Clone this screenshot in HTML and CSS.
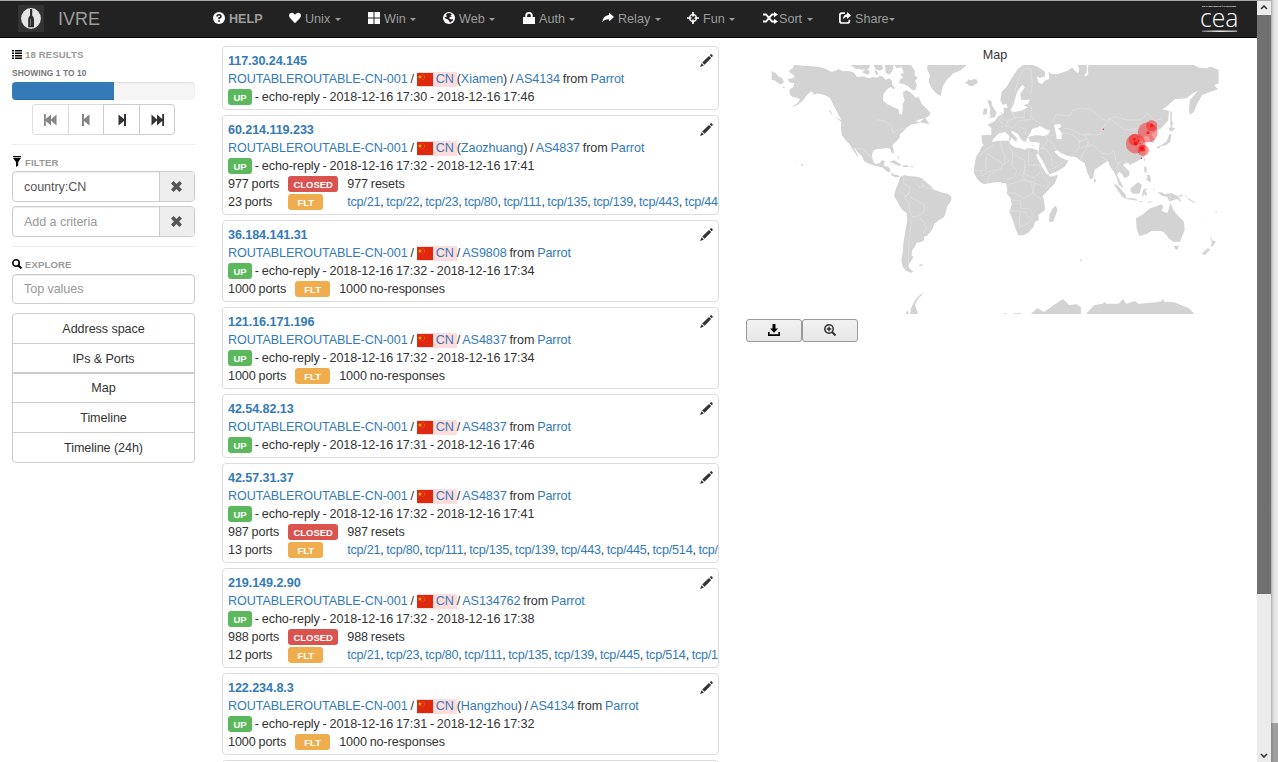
FILE: index.html
```html
<!DOCTYPE html>
<html lang="en">
<head>
<meta charset="utf-8">
<title>IVRE</title>
<link rel="stylesheet" href="styles.css">
</head>
<body>
<svg class="defs" aria-hidden="true">
  <symbol id="flag" viewBox="0 0 16 13"><path fill="#de2910" d="M0 0h16v13H0z"/><path fill="#ffb400" d="M3 2l.6 1.3 1.4.1-1 .9.3 1.500L3 5.100l-1.300.7.3-1.500-1-.9 1.400-.1z"/><path fill="#ee6a10" d="M5.500 1.200h1v1h-1zM7 2.700h1v1H7zM7 4.500h1v1H7zM5.500 6h1v1h-1z"/></symbol>
  <symbol id="pencil" viewBox="0 0 13 13"><path d="M9.700 1.300 10.800.3q.5-.4 1 .1l.8.8q.4.500 0 1L11.600 3.300zM9 1.900l2.200 2.200L4.600 10.700 2.200 8.500zM1.600 9.200l2.300 2.200L0 13z"/></symbol>
  <symbol id="times" viewBox="0 0 11 11"><path d="M2.600 0 5.500 2.900 8.400 0 11 2.600 8.100 5.500 11 8.400 8.400 11 5.500 8.100 2.600 11 0 8.400 2.900 5.500 0 2.600z"/></symbol>
</svg>
<div class="window">
<div class="page">
  <nav class="navbar">
    <a class="brand"><svg class="logo" viewBox="0 0 26 27"><rect width="26" height="27" rx="1" fill="#333"/><ellipse cx="13" cy="13.500" rx="9.900" ry="10.400" fill="#e4e4e4"/><path fill="#2c2c2c" d="M12 4h2.200v6.500q1.800 1.500 1.800 4v7.800h-5.800v-7.800q0-2.500 1.800-4z"/><path fill="#777" d="M12 14h1v7h-1z"/></svg><span>IVRE</span></a>
    <div class="menu">
      <a class="help"><svg viewBox="0 0 12 12"><circle cx="6" cy="6" r="6"/><path d="M4 4.600Q4 2.700 6 2.700T8 4.400Q8 5.400 6.100 6.100V7.300" fill="none" stroke="#222" stroke-width="1.600"/><path fill="#222" d="M5.200 8.300h1.700v1.500H5.200z"/></svg><b>HELP</b></a>
      <a class="unix"><svg viewBox="0 0 12 12"><path d="M6 11.200 1 6Q-.8 3.500.8 1.600 3.500-.5 6 2.700 8.500-.5 11.200 1.600 12.800 3.500 11 6z"/></svg>Unix <i class="caret"></i></a>
      <a><svg viewBox="0 0 12 12"><path d="M0 0h5.500v5.500H0zM6.500 0H12v5.500H6.500zM0 6.500h5.500V12H0zM6.500 6.500H12V12H6.500z"/></svg>Win <i class="caret"></i></a>
      <a><svg viewBox="0 0 12 12"><circle cx="6" cy="6" r="6"/><path fill="#222" d="M4 1.500 7 1l2 1.500-1.500.8L9 5 7.300 4.800 6 6l2 1.500 1.500-.5.800 1L7 10.800 6 9 5 7.500 2 6.300 1.500 4.500l1.300.8L4 4.300 3 3z"/></svg>Web <i class="caret"></i></a>
      <a><svg viewBox="0 0 12 12"><path d="M0 5h2.300V3Q2.500 0 6 0T9.700 3V5H12v7H0zM4.200 5h3.600V3.500Q7.800 1.800 6 1.800T4.200 3.500z"/></svg>Auth <i class="caret"></i></a>
      <a><svg viewBox="0 0 12 12"><path d="M7 .5l5 4.500L7 9.600V7.200Q2.500 7 0 10.500 1 3.500 7 3z"/></svg>Relay <i class="caret"></i></a>
      <a><svg viewBox="0 0 12 12"><g fill="none" stroke="#fff"><circle cx="6" cy="6" r="3.300" stroke-width="1.300"/><path stroke-width="1.700" d="M6 0v4.500M6 7.500V12M0 6h4.500M7.500 6H12"/></g></svg>Fun <i class="caret"></i></a>
      <a class="sort"><svg viewBox="0 0 15 12"><path fill="none" stroke="#fff" stroke-width="1.900" d="M0 2.500h3L9 9.500h3M0 9.500h3L9 2.500h3"/><path d="M11 0l4 2.600L11 5.300zM11 6.700l4 2.700-4 2.600z"/></svg>Sort <i class="caret"></i></a>
      <a><svg viewBox="0 0 12 12"><path fill="none" stroke="#fff" stroke-width="1.700" d="M6 1.200H3Q.9 1.200.9 3v6q0 2 2 2h5.500q2 0 2-2V7.800"/><path d="M8 0l4 3.500L8 7V4.700Q5.500 4.700 4 7.500 4 2.500 8 2.200z"/></svg>Share<i class="caret"></i></a>
    </div>
    <svg class="cea" viewBox="0 0 40 30"><text x="2" y="3" font-size="2.600" font-weight="bold" textLength="34" lengthAdjust="spacingAndGlyphs">DE LA RECHERCHE À L'INDUSTRIE</text><text class="word" x="0" y="22.500" font-size="25" textLength="38.500" lengthAdjust="spacingAndGlyphs">cea</text><defs><linearGradient id="bar"><stop stop-color="#777"/><stop offset=".5" stop-color="#fff"/><stop offset="1" stop-color="#aaa"/></linearGradient></defs><rect x="2" y="26.500" width="35" height="1.400" fill="url(#bar)"/></svg>
  </nav>
  <div class="content">
    <aside>
      <h6 class="first"><svg viewBox="0 0 10 9"><path d="M0 0h2v1.500H0zM3 0h7v1.500H3zM0 2.500h2V4H0zM3 2.500h7V4H3zM0 5h2v1.500H0zM3 5h7v1.500H3zM0 7.500h2V9H0zM3 7.500h7V9H3z"/></svg>18 RESULTS</h6>
      <div class="showing">SHOWING 1 TO 10</div>
      <div class="progress"><div class="done"></div></div>
      <div class="pager">
        <button class="off"><svg viewBox="0 0 13 12"><path d="M0 0h1.800v5L7 0.500v5L12.500.5v11L7 6.500v5L1.800 7v5H0z"/></svg></button>
        <button class="off"><svg class="one" viewBox="0 0 8 12"><path d="M0 0h2v5L7.500.5v11L2 7v5H0z"/></svg></button>
        <button><svg class="one" viewBox="0 0 8 12"><path d="M8 0H6v5L.5.5v11L6 7v5h2z"/></svg></button>
        <button><svg viewBox="0 0 13 12"><path d="M13 0h-1.800v5L6 .5v5L.5.500v11L6 6.500v5L11.200 7v5H13z"/></svg></button>
      </div>
      <hr>
      <h6><svg class="funnel" viewBox="0 0 10 11"><path d="M1 0h8v1.200H1zM1 2h8L6.200 6v3.500L4 11V6z"/></svg>FILTER</h6>
      <div class="field"><span class="value">country:CN</span><span class="addon"><svg><use href="#times"/></svg></span></div>
      <div class="field"><span class="hint">Add a criteria</span><span class="addon"><svg><use href="#times"/></svg></span></div>
      <hr class="second">
      <h6><svg class="search" viewBox="0 0 10 10"><circle cx="4" cy="4" r="3.200" fill="none" stroke="#000" stroke-width="1.600"/><path stroke="#000" stroke-width="2" d="M6.200 6.200l3.200 3.200"/></svg>EXPLORE</h6>
      <div class="field top"><span class="hint">Top values</span></div>
      <div class="choices"><a>Address space</a><a>IPs &amp; Ports</a><a class="mid">Map</a><a>Timeline</a><a>Timeline (24h)</a></div>
    </aside>
    <main>
      <section class="host"><svg class="edit"><use href="#pencil"/></svg>
        <p><a class="ip">117.30.24.145</a></p>
        <p><a>ROUTABLEROUTABLE-CN-001</a> / <a class="cn"><svg><use href="#flag"/></svg>CN</a>(<a>Xiamen</a>) / <a>AS4134</a> from <a>Parrot</a></p>
        <p><span class="tag up">UP</span> - echo-reply - 2018-12-16 17:30 - 2018-12-16 17:46</p>
      </section>
      <section class="host"><svg class="edit"><use href="#pencil"/></svg>
        <p><a class="ip">60.214.119.233</a></p>
        <p><a>ROUTABLEROUTABLE-CN-001</a> / <a class="cn"><svg><use href="#flag"/></svg>CN</a>(<a>Zaozhuang</a>) / <a>AS4837</a> from <a>Parrot</a></p>
        <p><span class="tag up">UP</span> - echo-reply - 2018-12-16 17:32 - 2018-12-16 17:41</p>
        <div class="ports"><span>977 ports</span><span class="tag closed">CLOSED</span><span>977 resets</span><span>23 ports</span><span class="tag flt">FLT</span><span class="list"><a>tcp/21</a>, <a>tcp/22</a>, <a>tcp/23</a>, <a>tcp/80</a>, <a>tcp/111</a>, <a>tcp/135</a>, <a>tcp/139</a>, <a>tcp/443</a>, <a>tcp/445</a></span></div>
      </section>
      <section class="host"><svg class="edit"><use href="#pencil"/></svg>
        <p><a class="ip">36.184.141.31</a></p>
        <p><a>ROUTABLEROUTABLE-CN-001</a> / <a class="cn"><svg><use href="#flag"/></svg>CN</a>/ <a>AS9808</a> from <a>Parrot</a></p>
        <p><span class="tag up">UP</span> - echo-reply - 2018-12-16 17:32 - 2018-12-16 17:34</p>
        <div class="ports"><span>1000 ports</span><span class="tag flt">FLT</span><span>1000 no-responses</span></div>
      </section>
      <section class="host"><svg class="edit"><use href="#pencil"/></svg>
        <p><a class="ip">121.16.171.196</a></p>
        <p><a>ROUTABLEROUTABLE-CN-001</a> / <a class="cn"><svg><use href="#flag"/></svg>CN</a>/ <a>AS4837</a> from <a>Parrot</a></p>
        <p><span class="tag up">UP</span> - echo-reply - 2018-12-16 17:32 - 2018-12-16 17:34</p>
        <div class="ports"><span>1000 ports</span><span class="tag flt">FLT</span><span>1000 no-responses</span></div>
      </section>
      <section class="host"><svg class="edit"><use href="#pencil"/></svg>
        <p><a class="ip">42.54.82.13</a></p>
        <p><a>ROUTABLEROUTABLE-CN-001</a> / <a class="cn"><svg><use href="#flag"/></svg>CN</a>/ <a>AS4837</a> from <a>Parrot</a></p>
        <p><span class="tag up">UP</span> - echo-reply - 2018-12-16 17:31 - 2018-12-16 17:46</p>
      </section>
      <section class="host"><svg class="edit"><use href="#pencil"/></svg>
        <p><a class="ip">42.57.31.37</a></p>
        <p><a>ROUTABLEROUTABLE-CN-001</a> / <a class="cn"><svg><use href="#flag"/></svg>CN</a>/ <a>AS4837</a> from <a>Parrot</a></p>
        <p><span class="tag up">UP</span> - echo-reply - 2018-12-16 17:32 - 2018-12-16 17:41</p>
        <div class="ports"><span>987 ports</span><span class="tag closed">CLOSED</span><span>987 resets</span><span>13 ports</span><span class="tag flt">FLT</span><span class="list"><a>tcp/21</a>, <a>tcp/80</a>, <a>tcp/111</a>, <a>tcp/135</a>, <a>tcp/139</a>, <a>tcp/443</a>, <a>tcp/445</a>, <a>tcp/514</a>, <a>tcp/1025</a></span></div>
      </section>
      <section class="host"><svg class="edit"><use href="#pencil"/></svg>
        <p><a class="ip">219.149.2.90</a></p>
        <p><a>ROUTABLEROUTABLE-CN-001</a> / <a class="cn"><svg><use href="#flag"/></svg>CN</a>/ <a>AS134762</a> from <a>Parrot</a></p>
        <p><span class="tag up">UP</span> - echo-reply - 2018-12-16 17:32 - 2018-12-16 17:38</p>
        <div class="ports"><span>988 ports</span><span class="tag closed">CLOSED</span><span>988 resets</span><span>12 ports</span><span class="tag flt">FLT</span><span class="list"><a>tcp/21</a>, <a>tcp/23</a>, <a>tcp/80</a>, <a>tcp/111</a>, <a>tcp/135</a>, <a>tcp/139</a>, <a>tcp/445</a>, <a>tcp/514</a>, <a>tcp/1025</a></span></div>
      </section>
      <section class="host"><svg class="edit"><use href="#pencil"/></svg>
        <p><a class="ip">122.234.8.3</a></p>
        <p><a>ROUTABLEROUTABLE-CN-001</a> / <a class="cn"><svg><use href="#flag"/></svg>CN</a>(<a>Hangzhou</a>) / <a>AS4134</a> from <a>Parrot</a></p>
        <p><span class="tag up">UP</span> - echo-reply - 2018-12-16 17:31 - 2018-12-16 17:32</p>
        <div class="ports"><span>1000 ports</span><span class="tag flt">FLT</span><span>1000 no-responses</span></div>
      </section>
      <section class="host"></section>
    </main>
    <div class="mapcol">
      <div class="title">Map</div>
      <svg class="map" viewBox="18 75 1494 747">
        <g fill="#d3d3d3">
          <path d="M95 93l12 6 8 10 10 4 7 12-8 9-10-5-10-8-9-1zM126 138l10 4-6 3z"/>
          <path d="M163 75l-5 10-12 7 6 8 12 7-4 7-18 4 8 10 13 1-3 12-12 8 2 15 8 7 14 3 8 3-6 11-22 14 20-7 16-12 16-22 11-7 7 10 10-4 18 4 18 8 7 12 7 15 8 13 6 14 8 13-1 25 2 20 10 15 13 13 7 12 10 15 10 15-3-12-12-20 6 5 10 13 12 12 4 12 13 6 15 6 18 4 12 4 10 10 12 4 4 9 12 5 12-2-6-4-9-2-14-6-1-11-5-7-10-1-4-8 5-8-11-2-6 9-14 1-7-10-2-15 3-13 11-6 15-1 15-3 10 3 7 15 5-5-5-20 13-13 10-12-1-8 11-9 10-11 15-10 15-2 10-5-14-3 20-7 18-6 8-10-12-14-14-13-6-12-5-12-6 6-8-9-10-9-12-6-10 4 1 14 4 12-6 12v15l-3 17-8-5-1-12-15-6-20-10-12-11 1-18 11-15 15-10 0-14-7-9-13 4-7-9-10-3-6 6-14-2-13 4-16-6-18 2-12-14-14-4-16 1-14-6-20 8-25-12-18-4z"/>
          <path d="M330 75h60l-2 10-12 5-28-4zM365 96l16-8 10 8-8 8zM400 75h26l3 12-9 5-14-6zM435 75h26l-2 13-10 16-12-6zM407 88l9 14-6 3-6-10zM463 75h50l12 18-2 12 10 9-8 8 5 13-3 14-9 2-14-12-13-7-14-3 4-12 8-4-8-10 10-5-6-16-16 2zM445 128l10 5 10 10-4 5-9-8-11 5zM540 246l15-14 13 20-20-3zM268 209l5 4 3 12-4-4zM288 230l18 12 2 8-14-12z"/>
          <path d="M562 75h118l-20 17-20 8-20 20-12 20-6 28-14-8-13-15-9-20 4-20-8-15zM675 125l5 2 5-9 8 3 10-4 8 2 2 10-16 10-12-3-2-5-8-2z"/>
          <path d="M448 365l14-4 25 15-12 1zM487 377l12-2 9 5-18 2zM512 379h8v3h-8zM472 350l5-1-1 10zM170 365h4v2h-4zM183 373l5-1v6h-4z"/>
          <path d="M480 412l12-7 13 3 25 2 15 5 15 13 15 12 4 8 21 8 25 6 10 10-3 13-10 13-4 17-6 17-17 10-13 10-2 10-10 16-10 10-8 2 1 10-8 5-15 3-5 12-8 10-2 15 5 7-8 13-7 10 3 10 12 10-8 3-14-6-10-12-4-20 4-20 2-30 7-40 5-30-2-20-15-12-10-18-13-22 6-23 7-15zM537 674l12-2-4 6-7-1zM510 822l3-17 7-15 12-18 18-15-4 7-12 13-9 17 9 28zM498 822l3-13 6 13z"/>
          <g transform="translate(720)">
            <path d="M65 155l15-15 15-25 20-30 15-10h28l15 5 22 15 1 14-14 4-12-3 6 18 10 4 8-10 14-6-2-20 10 6 18 0 28-10 14-9 8 8 9 9 5-8-4-17h26l0 22-7 10 4 2 8-6-2-18 3-10 315 0 17 8 20 2 15-5 23 10v40l-13 6 11 12-22 7-25 10-15 25-10 25-12 10-3-15 3-30 24-28-15 8-20 15-35 3-25 22-12 8 20 4-2 28-21 25-20 10-10 7 10 18-3 10-10-5-4-15-10-2-8 7-12-5 4 10 13 2-7 13 12 20-10 20-20 10-15 7-15-4-10 7 20 20-2 13-13 7-10-15-7-5-6 10 13 25 7 15-14-10-8-25-8-15-12-17-5-16-15 10-25 18-5 25-8 3-10-23-7-25-15-10-10-8-25-4-20-8-13-10-7 5 15 17 26 10-11 18-25 15-20 8-5-8-15-30-15-25 3-15 2-17-28-3-6-13 23-10 16 3 22-5 5-8-15-5-17-10-12 10 2 8-20 7-5 8-8 17-12-8-10-17-18-10-3 4 18 18-2 12-10-8-24-22-20 5-17 18-2 13-22 7-8-10-2-23 30-2v-20l-12-10 22-10 10-15 18-10-2-15 12-1 17 14 25-5 20-10-14-6 14-5 6-12-26 1-3-18 13-20-7-8-16 22-10 36-10 20h-7l-4-20-12 2-7-12z"/>
            <path d="M20 308l-15 12-7 15-10 15-3 20-3 15v15l10 18 13 12 10 2 20-4 25-3 5 5h13l4 20-2 10 12 15 3 20-7 20 10 25 10 30 7 16 15 0 15-8 15-16 5-17 11-5-1-15 20-15-3-30-4-12 17-18 20-20 9-25-24 5-10-15-12-20-13-30-3-15-17-5-15 0-5 5-15-5-15-3-15-10-2-10h-33l-17 4z"/>
            <path d="M22 180l13 2 0 12 15 24-5 14-20 3 8-8-4-6 2-14zM12 205l10 2-2 16-12 2zM228 497l4 13-12 35-12 1v-21l10-20zM342 415l6 5-2 7h-4zM88 288l4 2v12l-5-1zM152 317l14-2-6 4zM78 185l6-2 2 14-5 1z"/>
            <path d="M468 535l22-13 20-17 15-5 20-7 5 7-5 12 17 8 10-32 8 22 12 15 20 20 2 25-14 35-20 0-15-10-6-12-4 2-2-8-13-4-25 0-15 9-22 6-8-22zM582 617l14 0-3 12-8-2zM689 587l10 15 9 2-12 18-3-5 3-10zM665 641l18-16 8 3-16 17z"/>
            <path d="M400 430l12 6 25 28 2 12-12-5-14-20zM438 473l30 3 5 6-30-4zM452 445l22-18 12 8-8 26-18 0-8-6zM490 448l14-3-8 8 6 10-6 5-4-9-2 13-4-6zM477 483l20 2-18 1zM500 487l18-5-9 6zM520 443l4 8-4-2zM532 457l14 0 8 6 20-4 20 10 12 18-16-10-22 8-6-14-16-4zM594 468l15-6-5 8zM610 462l14 10-3 1zM625 475l20 12-2 2-20-11zM655 526l10 8-2-1zM704 517l8-3-3 5z"/>
            <path d="M492 382l6-3 3 14-7 7zM498 404l12 2 4 18-6 2-10-8 5-6zM494 354l3 2-4 9-2-5zM446 370l8-1-3 8zM528 322l18-8 14-10 8-22 6 2-3 22-12 9-18 4-4 8zM566 268l4-8 15 5-10 10zM571 212l5 4-1 25 4 8-4 15-4-10z"/>
            <path d="M152 822l20-18 20 12 25-18 32-21 18 18 24-2 12 9 0 20zM318 822l25-27 25-4 5-6 5 6 38 0 13-14 10 14 26-8 10 8 54-4 16-4 3-8 4 10 30 2 45 18 16 17zM72 820h8v2h-8zM102 820l20-1v3h-20zM300 658l6 1-1 5-4-1z"/>
            <path fill="#fff" d="M148 284l8-16 12-6 8 8 10-5 12 12 10 6-18 5-22-3-14 4zM222 255l18-4 4 10-10 4 12 15-2 18-14-2-2-15zM168 345l6-4 20 35 12 24-5 4-16-25z"/>
          </g>
        </g>
        <g fill="none" stroke="#e8e8e8" stroke-width="1.500">
          <path d="M411 239l22 4 22 15 3 20 15-7 27-8M335 325l35 2 18 20 18 12M425 388l8-16M492 408l-2 22 18 10 0 15-10 15-20-20M515 415l15 15 10 14 12-10 10 12 17 0M545 420l5 24M508 460l-15 12 14 20 4 25 8 15 16-5 18-12 0-22-28-14-15-10M535 530l18 16 4 20-8 14M515 540l-8 60-2 70"/>
          <g transform="translate(720)">
            <path d="M-12 355l30-26 22-14M18 350v42h-34M20 340l50 32 20-12M2 392l5 18 15-15 38-6 14-20M20 430l8-25 20-10M60 302l5 24 10 25-2 25M90 320l8 20 36 22 2 20-8 25 12 16 25 3M98 340l-2 38 14 12-8 22-24 8M145 325v50l35 0M134 375v28l30 10 18-18M82 435l28-8 20-9 25 12 4 30-28 16-28-18-20 2M180 380l10 28 18 18-8 20-10-8-26-8-5 30 20 15 14 3M95 480l25 2 4 25 22-2 15 18-10 12-20-20M92 512l50 5M120 517l-2 45 20-8 20-18M148 566l5-5 3 5-5 4z"/>
            <path d="M52 232l15 18-2 14M65 215l-3 20 22 10 20-12-10-22M84 245l-8 14 24 3 18-20 34-4M104 233l28 0 5-33M115 262l20 4 2 18M140 190l15 14-3 28 30 20M105 155l10-35 15-32 22-2 5 45-5 30M195 282l8 20-20 25M210 300l20 32M200 280l15 8 12-5M242 278l35 5 20 20 0 20-25 28M242 262l-22-20 8-18 40 4 10-18 28-6 30 5 30 28 20 6-20 20-4 20-26 2-30 0-40-20-16 0M295 305l28-8-10-14 20-4M302 325l22-10 0-15M300 358l22-38 15-6M338 315l28 25 25 3 8-12M388 235l45 35 40-4 35-22M383 240l20-10 40 10 40 0 20-20 20 22 20-5M365 350l12 8 10 10M402 330l5 32 8 10 12-12 14 5M407 385l15-20M420 375l18 20M515 275l10-10M175 325l20 0 18 22 5 34M205 390l18-6 30-20M570 458v25"/>
          </g>
        </g>
        <g transform="translate(720)" fill="#f00" fill-opacity=".4">
          <circle cx="467" cy="311" r="29.500"/><circle cx="503" cy="277" r="30"/><circle cx="515" cy="257" r="17"/><circle cx="490" cy="331" r="17"/><circle cx="463" cy="299" r="17"/><circle cx="467" cy="310" r="7"/><circle cx="487" cy="325" r="10"/>
          <g fill-opacity=".7"><circle cx="463" cy="298" r="4"/><circle cx="467" cy="311" r="5"/><circle cx="476" cy="303" r="3"/><circle cx="504" cy="278" r="5"/><circle cx="515" cy="257" r="5"/><circle cx="486" cy="325" r="5"/><circle cx="491" cy="331" r="3"/><circle cx="481" cy="311" r="2"/><circle cx="484" cy="355" r="2.400"/><circle cx="370" cy="268" r="2.400"/></g>
        </g>
      </svg>
      <div class="tools"><button><svg viewBox="0 0 12 12"><path d="M4.500 0h3v4.500H10L6 8.800 2 4.500h2.500zM0 8h1.600v2.200h8.800V8H12v4H0z"/></svg></button><button><svg viewBox="0 0 12 12"><g fill="none" stroke="#333" stroke-width="1.500"><circle cx="5" cy="5" r="4.200"/><path d="M5 2.700v4.600M2.700 5h4.600"/><path stroke-width="2" d="M8 8l3.500 3.500"/></g></svg></button></div>
    </div>
  </div>
</div>
<div class="scroll"><div class="arrow"><svg viewBox="0 0 8 5"><path d="M1 4l3-3 3 3"/></svg></div><div class="thumb"></div><div class="arrow"><svg viewBox="0 0 8 5"><path d="M1 1l3 3 3-3"/></svg></div></div>
<div class="outside"><div></div></div>
</div>
</body>
</html>
```
FILE: styles.css
```css
* { box-sizing: border-box; }
body { margin: 0; background: #fff; color: #333; font: 12.6px/18px "Liberation Sans", Arial, sans-serif; overflow: hidden; }
p, h6 { margin: 0; }
a { color: #337ab7; text-decoration: none; }
svg { fill: currentColor; flex: none; }
.defs { position: absolute; width: 0; height: 0; }
.window { display: flex; width: 1278px; height: 762px; overflow: hidden; }
.page { width: 1257px; height: 762px; overflow: hidden; }

.navbar { display: flex; height: 38px; background: #222; border-top: 1px solid #a5a9a8; border-bottom: 1px solid #080808; color: #9d9d9d; }
.navbar a { color: #9d9d9d; }
.brand { display: flex; width: 213px; padding: 4px 0 0 18px; font-size: 18px; line-height: 28px; }
.brand span { margin-left: 14px; }
.logo { width: 26px; height: 27px; }
.menu { display: grid; grid-template-columns: 77px 78px 75px 80px 79px 85px 76px 76px 80px; padding-top: 9px; white-space: nowrap; }
.menu svg { width: 12px; height: 12px; margin-right: 4px; fill: #fff; vertical-align: -1px; }
.menu .unix svg { margin: 0 4px 0 -1px; }
.menu .sort svg { width: 15px; margin-right: 1px; }
.caret { display: inline-block; border: 3px solid transparent; border-top-color: #9d9d9d; border-bottom: 0; vertical-align: 2px; }
.menu a:not(:last-child) .caret { margin-left: 1px; }
.cea { width: 40px; height: 30px; margin: 3px 17px 0 auto; fill: #fff; font-family: Lato, sans-serif; overflow: visible; }
.word { font-family: "Open Sans", sans-serif; font-weight: 300; }

.content { display: flex; height: 724px; }
aside { width: 195px; padding: 10px 0 0 12px; flex: none; letter-spacing: -.08px; }
h6 { display: flex; align-items: center; height: 14px; font-size: 9.6px; line-height: 14px; letter-spacing: .1px; color: #999; }
h6 svg { width: 10px; height: 9px; margin-right: 3px; color: #000; }
h6.first svg { margin-top: -1px; }
h6 .funnel { height: 11px; margin-top: -3px; }
h6 .search { height: 10px; margin-top: -2px; }
.showing { margin-top: 4px; font-size: 8.4px; line-height: 14px; font-weight: bold; letter-spacing: .07px; color: #777; }
.progress { height: 18px; margin-top: 2px; border-radius: 4px; background: #f5f5f5; box-shadow: inset 0 1px 2px rgba(0,0,0,.1); overflow: hidden; }
.done { width: 102px; height: 18px; background: #337ab7; box-shadow: inset 0 -1px 0 rgba(0,0,0,.15); }
.pager { display: flex; margin: 4px 0 0 20px; }
.pager button { display: flex; align-items: center; justify-content: center; width: 36px; height: 31px; padding: 0; margin-right: -1px; border: 1px solid #ccc; background: #fff; color: #333; }
.pager button:nth-child(3) { width: 37px; }
.pager button:nth-child(1) { width: 37px; border-radius: 4px 0 0 4px; }
.pager button:last-child { border-radius: 0 4px 4px 0; margin-right: 0; }
.pager .off { color: #858585; border-color: #ddd; border-right-color: #ccc; }
.pager svg { width: 13px; height: 12px; }
.pager .one { width: 8px; }
hr { margin: 9px 0 11px; border: 0; border-top: 1px solid #eee; }
.field { display: flex; height: 31px; margin-bottom: 4px; border: 1px solid #ccc; border-radius: 4px; box-shadow: inset 0 1px 1px rgba(0,0,0,.075); line-height: 31px; overflow: hidden; }
h6 + .field { margin-top: 1px; }
.field > span:first-child { flex: 1; padding-left: 11px; }
.value { color: #555; }
.hint { color: #999; }
.addon { display: flex; align-items: center; justify-content: center; width: 35px; padding-right: 2px; border-left: 1px solid #ccc; background: #eee; color: #555; }
.addon svg { width: 11px; height: 11px; }
h6 + .top { height: 30px; margin: 2px 0 9px; line-height: 29px; }
.choices { display: grid; grid-template-rows: 29px 29px 30px 30px 30px; border: 1px solid #ccc; border-radius: 4px; text-align: center; line-height: 30px; height: 150px; }
.choices a { color: #333; }
.choices a + a { border-top: 1px solid #ccc; }
.choices .mid { border-top-width: 2px; line-height: 28px; }

main { flex: none; width: 497px; margin-left: 27px; padding-top: 8px; letter-spacing: -.08px; word-spacing: -.6px; }
.host { position: relative; min-height: 10px; margin-bottom: 5px; padding: 5px 0 3px 5px; border: 1px solid #ddd; border-radius: 4px; overflow: hidden; white-space: nowrap; }
.host p { height: 18px; }
.ip { font-weight: bold; }
.edit { position: absolute; right: 5px; top: 7px; width: 13px; height: 13px; }
.cn { display: inline-block; width: 40px; height: 15px; line-height: 15px; background: #fdd; }
.cn svg { width: 16px; height: 13px; margin-right: 3px; vertical-align: -3px; }
.tag { display: inline-block; height: 16px; border-radius: 3px; color: #fff; font-size: 9.450px; font-weight: bold; line-height: 18px; text-align: center; letter-spacing: 0; }
.up { width: 24px; background: #5cb85c; vertical-align: 0; }
.closed { width: 50px; background: #d9534f; }
.flt { width: 35px; background: #f0ad4e; }
.ports { display: grid; grid-template-columns: max-content max-content max-content; column-gap: 9px; grid-auto-rows: 18px; }
.ports .tag { margin-top: 1px; }
.list { letter-spacing: -.21px; }

.mapcol { width: 498px; margin-left: 27px; padding-top: 8px; }
.title { height: 19px; text-align: center; }
.map { display: block; width: 498px; height: 249px; }
.tools { display: flex; margin-top: 5px; }
.tools button { display: flex; align-items: center; justify-content: center; width: 56px; height: 23px; padding: 0 0 2px; border: 1px solid #999; border-radius: 3px; background: linear-gradient(#f2f2f2, #e7e7e7); color: #000; }
.tools svg { width: 12px; height: 12px; }

.scroll { display: flex; flex-direction: column; width: 14px; background: #ececec; border-top: 1px solid #aaa; }
.arrow { display: flex; align-items: center; justify-content: center; height: 14px; }
.arrow svg { width: 8px; height: 5px; fill: none; stroke: #333; stroke-width: 1.600; }
.thumb { height: 580px; margin-bottom: 154px; background: #707070; }
.outside { width: 7px; padding-top: 723px; background: linear-gradient(90deg, #aaa, #ddd 30%, #eee); }
.outside div { height: 39px; background: linear-gradient(90deg, #888, #a0a0a0 40%); }
```
